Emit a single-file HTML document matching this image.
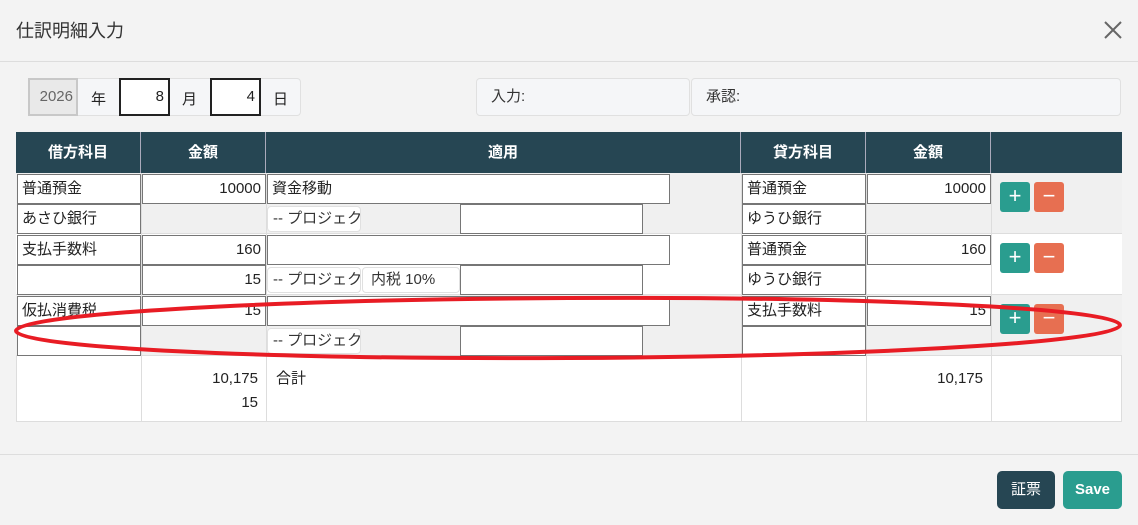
<!DOCTYPE html>
<html><head><meta charset="utf-8"><style>
*{box-sizing:border-box;margin:0;padding:0}
body{width:1138px;height:525px;background:#f3f3f3;font-family:"Liberation Sans","Noto Sans CJK JP",sans-serif;font-size:15px;color:#222;position:relative;overflow:hidden}
.a{position:absolute}
.in{position:absolute;background:#fff;border:1px solid #767676;height:30px;line-height:28px;padding:0 4px;font-size:15px;white-space:nowrap;overflow:hidden}
.r{text-align:right}
.pb{position:absolute;background:#fff;border:1px solid #e0e0e0;border-radius:4px;height:26px;line-height:24px;padding:0 5px;font-size:15px;color:#333;white-space:nowrap;overflow:hidden}
.btn{position:absolute;width:30px;height:30px;border-radius:3px;color:#fff;font-size:22px;line-height:28px;text-align:center}
.th{position:absolute;top:132px;height:41px;line-height:41px;color:#fff;font-weight:bold;font-size:15px;text-align:center;border-right:1px solid #aab}
</style></head><body>
<div class="a" style="left:16px;top:17px;font-size:18px;color:#333">仕訳明細入力</div>
<svg class="a" style="left:1104px;top:21px" width="18" height="18"><path d="M1 1L17 17M17 1L1 17" stroke="#666" stroke-width="2"/></svg>
<div class="a" style="left:0;top:61px;width:1138px;height:1px;background:#ddd"></div>

<div class="a" style="left:28px;top:78px;width:273px;height:38px;background:#f5f6f8;border:1px solid #e0e0e0;border-radius:4px"></div>
<div class="a" style="left:28px;top:78px;width:50px;height:38px;background:#e9e9e9;border:2px solid #c8c8c8;line-height:34px;text-align:right;padding-right:3px;color:#666">2026</div>
<div class="a" style="left:91px;top:88px">年</div>
<div class="a" style="left:119px;top:78px;width:51px;height:38px;background:#fff;border:2px solid #222;line-height:34px;text-align:right;padding-right:4px">8</div>
<div class="a" style="left:182px;top:88px">月</div>
<div class="a" style="left:210px;top:78px;width:51px;height:38px;background:#fff;border:2px solid #222;line-height:34px;text-align:right;padding-right:4px">4</div>
<div class="a" style="left:273px;top:88px">日</div>

<div class="a" style="left:476px;top:78px;width:214px;height:38px;background:#f5f6f8;border:1px solid #e0e0e0;border-radius:4px;line-height:36px;padding-left:14px;color:#333">入力:</div>
<div class="a" style="left:691px;top:78px;width:430px;height:38px;background:#f5f6f8;border:1px solid #e0e0e0;border-radius:4px;line-height:36px;padding-left:14px;color:#333">承認:</div>

<div class="a" style="left:16px;top:132px;width:1106px;height:290px;background:#fff;border:1px solid #ddd"></div>
<div class="a" style="left:16px;top:132px;width:1106px;height:41px;background:#264653"></div>
<div class="th" style="left:16px;width:125px">借方科目</div>
<div class="th" style="left:141px;width:125px">金額</div>
<div class="th" style="left:266px;width:475px">適用</div>
<div class="th" style="left:741px;width:125px">貸方科目</div>
<div class="th" style="left:866px;width:125px">金額</div>
<div class="a" style="left:16px;top:173px;width:1106px;height:61px;background:#f0f0f0;border-bottom:1px solid #ddd"></div>
<div class="a" style="left:16px;top:234px;width:1106px;height:61px;background:#fff;border-bottom:1px solid #ddd"></div>
<div class="a" style="left:16px;top:295px;width:1106px;height:61px;background:#f0f0f0;border-bottom:1px solid #ddd"></div>
<div class="a" style="left:141px;top:173px;width:1px;height:249px;background:#ddd"></div>
<div class="a" style="left:266px;top:173px;width:1px;height:249px;background:#ddd"></div>
<div class="a" style="left:741px;top:173px;width:1px;height:249px;background:#ddd"></div>
<div class="a" style="left:866px;top:173px;width:1px;height:249px;background:#ddd"></div>
<div class="a" style="left:991px;top:173px;width:1px;height:249px;background:#ddd"></div>

<div class="in" style="left:17px;top:174px;width:124px">普通預金</div>
<div class="in" style="left:17px;top:204px;width:124px">あさひ銀行</div>
<div class="in r" style="left:142px;top:174px;width:124px">10000</div>
<div class="in" style="left:267px;top:174px;width:403px">資金移動</div>
<div class="pb" style="left:267px;top:206px;width:94px">-- プロジェクト</div>
<div class="in" style="left:460px;top:204px;width:183px"></div>
<div class="in" style="left:742px;top:174px;width:124px">普通預金</div>
<div class="in" style="left:742px;top:204px;width:124px">ゆうひ銀行</div>
<div class="in r" style="left:867px;top:174px;width:124px">10000</div>
<div class="btn" style="left:1000px;top:182px;background:#2a9d8f">+</div>
<div class="btn" style="left:1034px;top:182px;background:#e76f51">−</div>

<div class="in" style="left:17px;top:235px;width:124px">支払手数料</div>
<div class="in" style="left:17px;top:265px;width:124px"></div>
<div class="in r" style="left:142px;top:235px;width:124px">160</div>
<div class="in r" style="left:142px;top:265px;width:124px">15</div>
<div class="in" style="left:267px;top:235px;width:403px"></div>
<div class="pb" style="left:267px;top:267px;width:94px">-- プロジェクト</div>
<div class="pb" style="left:362px;top:267px;width:98px;padding-left:8px">内税 10%</div>
<div class="in" style="left:460px;top:265px;width:183px"></div>
<div class="in" style="left:742px;top:235px;width:124px">普通預金</div>
<div class="in" style="left:742px;top:265px;width:124px">ゆうひ銀行</div>
<div class="in r" style="left:867px;top:235px;width:124px">160</div>
<div class="btn" style="left:1000px;top:243px;background:#2a9d8f">+</div>
<div class="btn" style="left:1034px;top:243px;background:#e76f51">−</div>

<div class="in" style="left:17px;top:296px;width:124px">仮払消費税</div>
<div class="in" style="left:17px;top:326px;width:124px"></div>
<div class="in r" style="left:142px;top:296px;width:124px">15</div>
<div class="in" style="left:267px;top:296px;width:403px"></div>
<div class="pb" style="left:267px;top:328px;width:94px">-- プロジェクト</div>
<div class="in" style="left:460px;top:326px;width:183px"></div>
<div class="in" style="left:742px;top:296px;width:124px">支払手数料</div>
<div class="in" style="left:742px;top:326px;width:124px"></div>
<div class="in r" style="left:867px;top:296px;width:124px">15</div>
<div class="btn" style="left:1000px;top:304px;background:#2a9d8f">+</div>
<div class="btn" style="left:1034px;top:304px;background:#e76f51">−</div>

<div class="a" style="left:142px;top:367px;width:116px;text-align:right;line-height:24px">10,175<br>15</div>
<div class="a" style="left:276px;top:367px;line-height:24px">合計</div>
<div class="a" style="left:867px;top:367px;width:116px;text-align:right;line-height:24px">10,175</div>

<svg class="a" style="left:0;top:0" width="1138" height="525"><ellipse cx="568" cy="328" rx="552" ry="30" transform="rotate(-0.3 568 328)" fill="none" stroke="#e81c24" stroke-width="4"/></svg>

<div class="a" style="left:0;top:454px;width:1138px;height:1px;background:#ddd"></div>
<div class="a" style="left:997px;top:471px;width:58px;height:38px;background:#264653;border-radius:5px;color:#fff;text-align:center;line-height:38px">証票</div>
<div class="a" style="left:1063px;top:471px;width:59px;height:38px;background:#2a9d8f;border-radius:5px;color:#fff;text-align:center;line-height:38px;font-weight:bold">Save</div>
</body></html>
